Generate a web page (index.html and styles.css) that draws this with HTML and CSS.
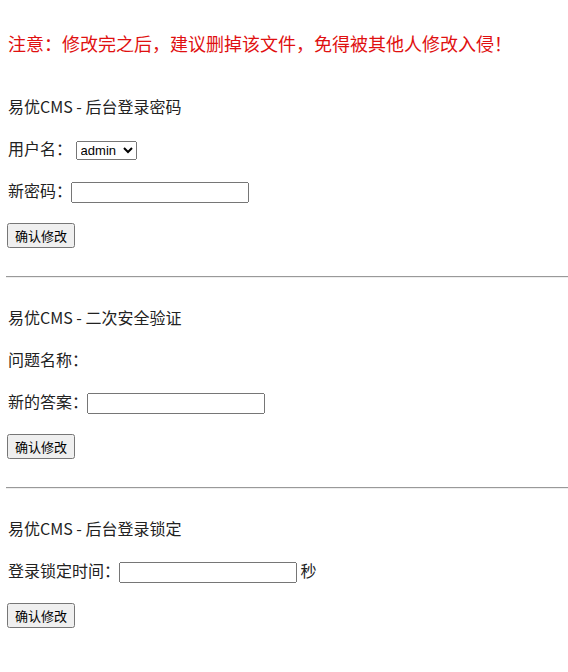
FILE: index.html
```html
<!DOCTYPE html>
<html>
<head>
    <meta charset="utf-8">
    <title>易优CMS - 修改密码</title>
    <link rel="stylesheet" href="styles.css">
</head>
<body>
    <p class="notice">注意：修改完之后，建议删掉该文件，免得被其他人修改入侵！</p>

    <!-- 后台登录密码 -->
    <form class="section" method="post">
        <div class="row">易优CMS - 后台登录密码</div>
        <div class="row">用户名：
            <select name="username" class="pick">
                <option>admin</option>
            </select>
        </div>
        <div class="row">新密码：<input type="text" name="password" class="field"></div>
        <div class="row actions"><button type="submit">确认修改</button></div>
    </form>
    <hr>

    <!-- 二次安全验证 -->
    <form class="section" method="post">
        <div class="row">易优CMS - 二次安全验证</div>
        <div class="row">问题名称：</div>
        <div class="row">新的答案：<input type="text" name="answer" class="field"></div>
        <div class="row actions"><button type="submit">确认修改</button></div>
    </form>
    <hr>

    <!-- 后台登录锁定 -->
    <form class="section" method="post">
        <div class="row">易优CMS - 后台登录锁定</div>
        <div class="row">登录锁定时间：<input type="text" name="locktime" class="field"> 秒</div>
        <div class="row actions"><button type="submit">确认修改</button></div>
    </form>
</body>
</html>
```

FILE: styles.css
```css
body {
    margin: 0;
    padding: 0 8px;
    font-family: "Noto Sans CJK SC", "Noto Sans", sans-serif;
    font-size: 16px;
    color: #222;
}

.notice {
    margin: 30px 0 37px;
    font-size: 18px;
    line-height: 26px;
    color: #e01010;
}

.section {
    margin: 0;
}

.row {
    line-height: 26px;
    margin-bottom: 16px;
}

.actions {
    padding-top: 2px;
}

.pick {
    font-family: "Liberation Sans", Arial, sans-serif;
    font-size: 13px;
    width: 61px;
}

.field {
    width: 170px;
    height: 15px;
    margin-left: -1px;
    vertical-align: middle;
}

button {
    font-family: "Noto Sans CJK SC", sans-serif;
    font-size: 13px;
    margin-left: -1px;
    margin-top: 2px;
}

hr {
    margin: 28px -8px 26px -2px;
    border: 0;
    border-top: 1px solid #999;
    border-bottom: 1px solid #eee;
}
```
